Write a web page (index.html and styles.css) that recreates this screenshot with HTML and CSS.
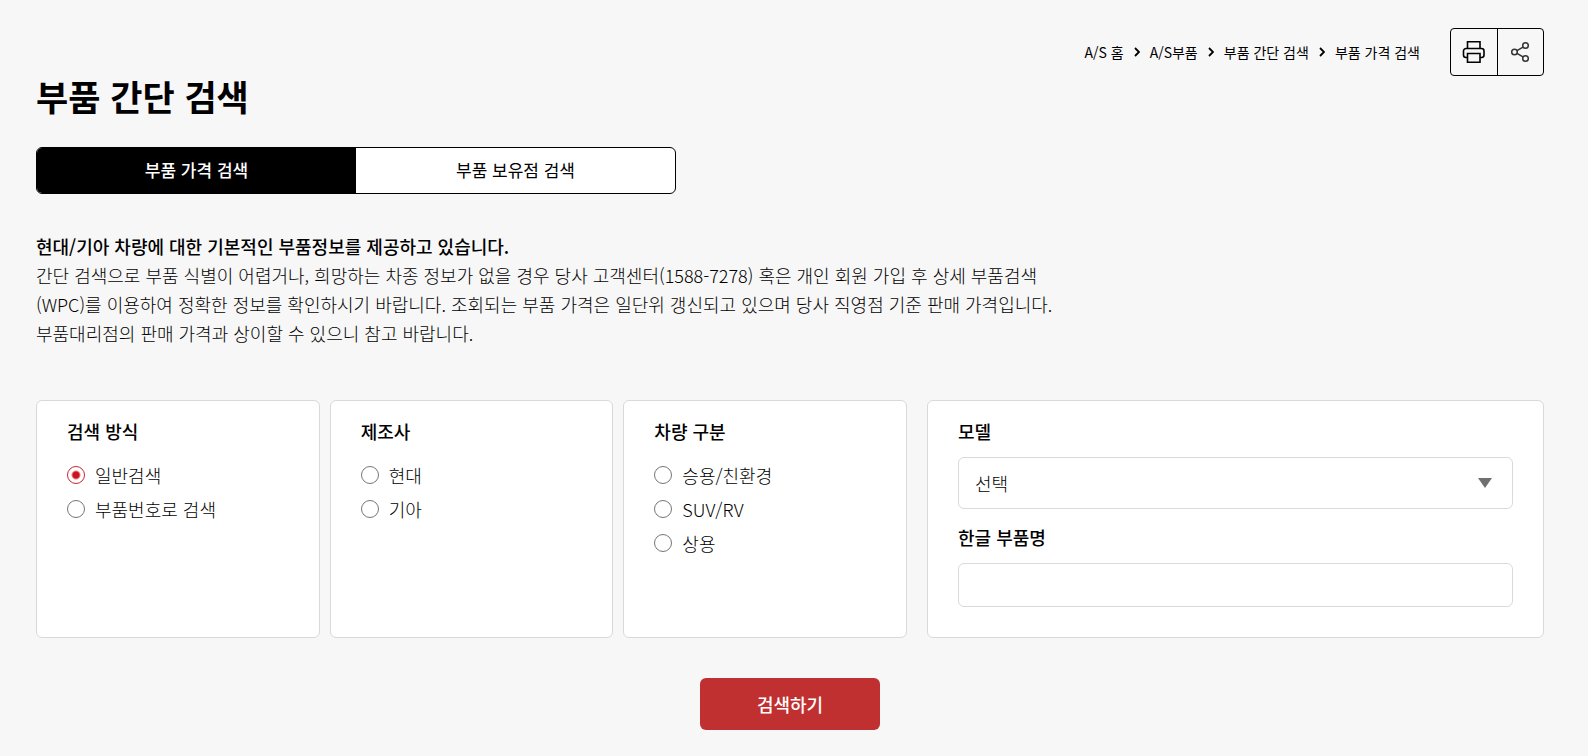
FILE: index.html
```html
<!DOCTYPE html>
<html lang="ko">
<head>
    <meta charset="UTF-8">
    <meta name="viewport" content="width=device-width, initial-scale=1.0">
    <title>부품 간단 검색</title>
    <link rel="stylesheet" href="styles.css">
</head>
<body>
    <header class="top">
        <h1>부품 간단 검색</h1>
        <nav class="breadcrumb">
            <a href="#">A/S 홈</a>
            <svg width="6" height="10" viewBox="0 0 6 10"><path d="M1 1l4 4-4 4"/></svg>
            <a href="#">A/S부품</a>
            <svg width="6" height="10" viewBox="0 0 6 10"><path d="M1 1l4 4-4 4"/></svg>
            <a href="#">부품 간단 검색</a>
            <svg width="6" height="10" viewBox="0 0 6 10"><path d="M1 1l4 4-4 4"/></svg>
            <a href="#">부품 가격 검색</a>
        </nav>
        <div class="tools">
            <button type="button" aria-label="인쇄">
                <svg width="24" height="24" viewBox="0 0 24 24" stroke="#000" stroke-width="1.6">
                    <path d="M5.5 8.500V1.800h12.500v6.700"/>
                    <path d="M5.500 17.500H4a2.500 2.500 0 0 1-2.500-2.500v-4a2.500 2.500 0 0 1 2.500-2.500h15.500a2.500 2.500 0 0 1 2.500 2.500v4a2.500 2.500 0 0 1-2.500 2.500H18"/>
                    <path d="M5.500 13.500H18v8.700H5.500z"/>
                </svg>
            </button>
            <button type="button" aria-label="공유">
                <svg width="24" height="24" viewBox="0 0 24 24" stroke="#333" stroke-width="1.5">
                    <circle cx="5.500" cy="12" r="2.800"/>
                    <circle cx="16.500" cy="5.500" r="2.800"/>
                    <circle cx="16.500" cy="18.500" r="2.800"/>
                    <path d="M8 10.600l6-3.500M8 13.400l6 3.500"/>
                </svg>
            </button>
        </div>
    </header>

    <nav class="tabs">
        <a href="#" class="active">부품 가격 검색</a>
        <a href="#">부품 보유점 검색</a>
    </nav>

    <p class="intro">
        <strong>현대/기아 차량에 대한 기본적인 부품정보를 제공하고 있습니다.</strong><br>
        간단 검색으로 부품 식별이 어렵거나, 희망하는 차종 정보가 없을 경우 당사 고객센터(1588-7278) 혹은 개인 회원 가입 후 상세 부품검색<br>
        (WPC)를 이용하여 정확한 정보를 확인하시기 바랍니다. 조회되는 부품 가격은 일단위 갱신되고 있으며 당사 직영점 기준 판매 가격입니다.<br>
        부품대리점의 판매 가격과 상이할 수 있으니 참고 바랍니다.
    </p>

    <form id="search-form">
        <div class="panels">
            <div class="options">
                <div class="card" role="radiogroup" aria-labelledby="type-title">
                    <h2 id="type-title">검색 방식</h2>
                    <label class="radio"><input type="radio" name="type" value="normal" checked>일반검색</label>
                    <label class="radio"><input type="radio" name="type" value="number">부품번호로 검색</label>
                </div>
                <div class="card" role="radiogroup" aria-labelledby="maker-title">
                    <h2 id="maker-title">제조사</h2>
                    <label class="radio"><input type="radio" name="maker" value="hyundai">현대</label>
                    <label class="radio"><input type="radio" name="maker" value="kia">기아</label>
                </div>
                <div class="card" role="radiogroup" aria-labelledby="car-title">
                    <h2 id="car-title">차량 구분</h2>
                    <label class="radio"><input type="radio" name="car" value="passenger">승용/친환경</label>
                    <label class="radio"><input type="radio" name="car" value="suv">SUV/RV</label>
                    <label class="radio"><input type="radio" name="car" value="commercial">상용</label>
                </div>
            </div>
            <div class="card">
                <label class="field-label" for="model">모델</label>
                <div class="select-box">
                    <select id="model" name="model">
                        <option>선택</option>
                    </select>
                    <svg width="14" height="10" viewBox="0 0 14 10"><path d="M0 0h14L7 10z"/></svg>
                </div>
                <label class="field-label" for="part">한글 부품명</label>
                <input type="text" id="part" name="part">
            </div>
        </div>
        <button type="submit" class="search-button">검색하기</button>
    </form>

    <script>
        document.getElementById('search-form').addEventListener('submit', function(event) {
            event.preventDefault();
        });
    </script>
</body>
</html>
```

FILE: styles.css
```css
* {
    box-sizing: border-box;
}

body {
    margin: 0;
    padding: 28px 44px 26px 36px;
    background-color: #f7f7f7;
    color: #000;
    font-family: "Noto Sans CJK KR", sans-serif;
    font-size: 18px;
    font-weight: 300;
    line-height: 29px;
}

a {
    color: inherit;
    text-decoration: none;
}

button, select, input {
    font: inherit;
    color: inherit;
}

.top {
    display: flex;
    align-items: flex-start;
}

h1 {
    margin: 42px auto 0 0;
    font-size: 35px;
    font-weight: 700;
    line-height: 52px;
}

.breadcrumb {
    display: flex;
    align-items: center;
    gap: 10px;
    height: 48px;
    margin-right: 30px;
    font-size: 14px;
    font-weight: 400;
}

.breadcrumb svg {
    fill: none;
    stroke: #000;
    stroke-width: 1.8;
}

.tools {
    display: flex;
    border: 1px solid #000;
    border-radius: 4px;
}

.tools button {
    display: flex;
    align-items: center;
    justify-content: center;
    width: 45px;
    height: 46px;
    padding: 0;
    border: none;
    background: none;
    cursor: pointer;
}

.tools button:first-child {
    width: 47px;
    border-right: 1px solid #000;
}

.tools svg {
    fill: none;
}

.tabs {
    display: flex;
    max-width: 640px;
    margin-top: 25px;
    border: 1px solid #000;
    border-radius: 6px;
    background-color: #fff;
    overflow: hidden;
}

.tabs a {
    flex: 1;
    padding: 7px 0 9px;
    font-size: 17px;
    font-weight: 400;
    text-align: center;
}

.tabs .active {
    background-color: #000;
    color: #fff;
    font-weight: 500;
}

.intro {
    margin: 38px 0 52px;
}

.intro strong {
    font-weight: 500;
}

.panels {
    display: grid;
    grid-template-columns: 871fr 617fr;
    gap: 20px;
}

.options {
    display: grid;
    grid-template-columns: repeat(3, 1fr);
    gap: 10px;
}

.card {
    padding: 16px 30px 30px;
    border: 1px solid #d9d9d9;
    border-radius: 6px;
    background-color: #fff;
}

h2, .field-label {
    display: block;
    margin: 0 0 11px;
    font-size: 18px;
    font-weight: 500;
    line-height: 29px;
}

h2 {
    margin-bottom: 12px;
}

.radio {
    display: flex;
    align-items: center;
    gap: 10px;
    height: 34px;
}

.radio input {
    appearance: none;
    width: 18px;
    height: 18px;
    margin: 0;
    border: 1px solid #767676;
    border-radius: 50%;
    background-color: #fff;
}

.radio input:checked {
    border-color: #c8262e;
    background-image: radial-gradient(circle, #d0111f 3px, transparent 5px);
}

.select-box {
    position: relative;
    margin-bottom: 14px;
}

.select-box svg {
    position: absolute;
    top: 21px;
    right: 21px;
    fill: #707070;
    pointer-events: none;
}

select, input[type="text"] {
    display: block;
    appearance: none;
    width: 100%;
    height: 44px;
    padding: 0 16px;
    border: 1px solid #d9d9d9;
    border-radius: 6px;
    background-color: #fff;
}

select {
    height: 52px;
}

.search-button {
    display: block;
    width: 180px;
    height: 52px;
    margin: 40px auto 0;
    border: none;
    border-radius: 6px;
    background-color: #c03030;
    color: #fff;
    font-weight: 500;
    cursor: pointer;
}
```
